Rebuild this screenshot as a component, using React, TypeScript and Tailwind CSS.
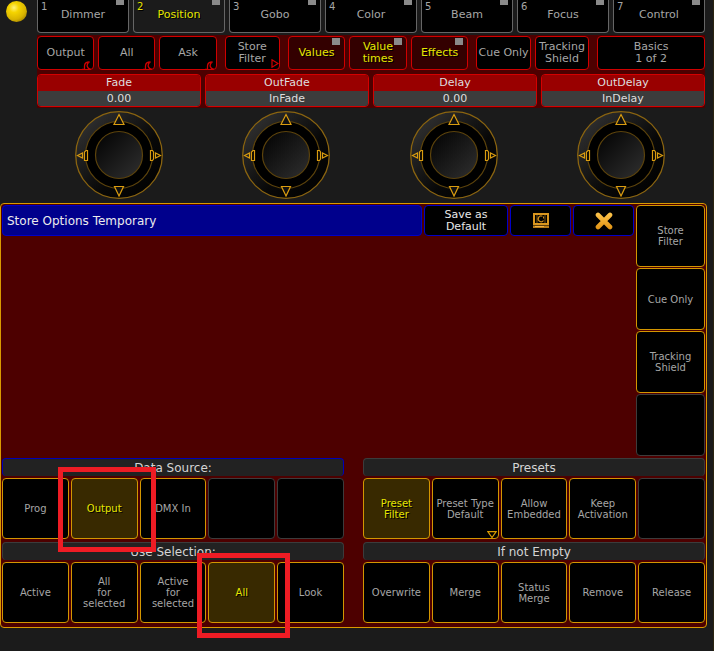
import React, { useId } from 'react';
import clsx from 'clsx';

type Cell = {
  label?: string;
  active?: boolean;
  mark?: 'menu';
  highlight?: string;
};

const PRESET_TYPES = ['Dimmer', 'Position', 'Gobo', 'Color', 'Beam', 'Focus', 'Control'];

const ENCODERS = [
  { label: 'Fade', value: '0.00' },
  { label: 'OutFade', value: 'InFade' },
  { label: 'Delay', value: '0.00' },
  { label: 'OutDelay', value: 'InDelay' },
];

const SIDE_OPTIONS: Cell[] = [
  { label: 'Store\nFilter' },
  { label: 'Cue Only' },
  { label: 'Tracking\nShield' },
  {},
];

const DATA_SOURCE: Cell[] = [
  { label: 'Prog' },
  { label: 'Output', active: true, highlight: '-left-[14px] -right-[19px] -top-3 -bottom-[14px]' },
  { label: 'DMX In' },
  {},
  {},
];

const PRESETS: Cell[] = [
  { label: 'Preset\nFilter', active: true },
  { label: 'Preset Type\nDefault', mark: 'menu' },
  { label: 'Allow\nEmbedded' },
  { label: 'Keep\nActivation' },
  {},
];

const USE_SELECTION: Cell[] = [
  { label: 'Active' },
  { label: 'All\nfor\nselected' },
  { label: 'Active\nfor\nselected' },
  { label: 'All', active: true, highlight: '-left-3 -right-4 -top-[10px] -bottom-4' },
  { label: 'Look' },
];

const IF_NOT_EMPTY: Cell[] = [
  { label: 'Overwrite' },
  { label: 'Merge' },
  { label: 'Status\nMerge' },
  { label: 'Remove' },
  { label: 'Release' },
];

const YELLOW = 'text-[#e6e600] [text-shadow:1px_1px_0_#000]';

function Lamp({ className }: { className?: string }) {
  return <span className={clsx('absolute h-[7px] w-2 bg-[#8a8a8a]', className)} />;
}

function PresetTab({ label, index }: { label: string; index: number }) {
  const active = index === 1;
  return (
    <button
      className={clsx(
        'relative h-[33px] min-w-0 flex-1 rounded-b-[4px] border border-t-0 border-[#666] pb-[3px] text-[11px] leading-3',
        active ? 'bg-[#1b1b1b]' : 'bg-black',
        active ? YELLOW : 'text-[#a6a6a6]'
      )}
    >
      <span className="absolute left-[3px] top-px text-[10px] leading-3">{index + 1}</span>
      <Lamp className="-top-0.5 right-1" />
      {label}
    </button>
  );
}

type BarButtonProps = {
  label: string;
  on?: boolean;
  corner?: 'hook' | 'arrow';
};

function BarButton({ label, on, corner }: BarButtonProps) {
  return (
    <button
      className={clsx(
        'relative h-[34px] min-w-0 flex-1 whitespace-pre rounded-[4px] border border-[#d00000] text-[11px] leading-3',
        on ? 'bg-[#330000]' : 'bg-black',
        on ? YELLOW : 'text-[#a6a6a6]'
      )}
    >
      <span className="flex justify-center">{label}</span>
      {on && <Lamp className="right-1 top-px" />}
      {corner === 'hook' && (
        <svg className="absolute -bottom-px right-0.5" width="9" height="9" viewBox="0 0 9 9" fill="none" stroke="#d00000">
          <path d="M0 8.500H2.500V5C2.500 2 4.500 1 7.500 1C5.500 2 4.800 3.500 5.300 5.500C5.600 7 6.500 7.800 9 8.500" strokeWidth="1.3" />
        </svg>
      )}
      {corner === 'arrow' && (
        <svg className="absolute bottom-px right-0" width="8" height="9" viewBox="0 0 8 9" fill="none" stroke="#d00000">
          <path d="M1 .8L7 4.500L1 8.200Z" strokeWidth="1.2" />
        </svg>
      )}
    </button>
  );
}

function EncoderField({ label, value }: { label: string; value: string }) {
  const id = useId();
  return (
    <div className="min-w-0 flex-1 overflow-hidden rounded-[4px] border border-[#d40000] text-center text-[11px] text-[#dedede]">
      <label htmlFor={id} className="block h-4 bg-[#990000] leading-4">
        {label}
      </label>
      <input
        id={id}
        defaultValue={value}
        className="block h-[15px] w-full bg-[#3c3c3c] p-0 text-center leading-4 outline-none"
      />
    </div>
  );
}

function Encoder() {
  const id = useId();
  return (
    <svg width="88" height="88" viewBox="0 0 88 88" fill="none">
      <defs>
        <linearGradient id={`${id}ring`} x1="0" y1="0" x2="1" y2="1">
          <stop offset="0" stopColor="#383838" />
          <stop offset="0.6" stopColor="#080808" />
          <stop offset="1" stopColor="#000" />
        </linearGradient>
        <linearGradient id={`${id}knob`} x1="0" y1="0" x2="1" y2="1">
          <stop offset="0.1" stopColor="#060606" />
          <stop offset="1" stopColor="#303030" />
        </linearGradient>
      </defs>
      <circle cx="44" cy="44" r="43.3" fill={`url(#${id}ring)`} stroke="#8a6410" strokeWidth="1.3" />
      <circle cx="44" cy="44" r="33.5" fill="#000" stroke="#5c430c" strokeWidth="1.2" />
      <circle cx="44" cy="44" r="23.5" fill={`url(#${id}knob)`} stroke="#5c430c" strokeWidth="1.2" />
      <g stroke="#d99c10" strokeWidth="1.2">
        <path d="M44 3.500L49 13.500H39Z" fill="#111" />
        <path d="M44 85L39.500 75.500H48.500Z" fill="#111" />
        <path d="M2.500 44.500L7.500 42V47Z" />
        <path d="M85.500 44.500L80.500 42V47Z" />
        <path d="M12.500 39.500V49.500H9.500V41L11 39.500Z" fill="#000" />
        <path d="M75.500 39.500V49.500H77.500L78.500 48V41L77.500 39.500Z" fill="#000" />
      </g>
    </svg>
  );
}

function OptionButton({ cell, className }: { cell: Cell; className: string }) {
  return (
    <button
      className={clsx(
        'relative whitespace-pre rounded-[4px] border text-[10px] leading-[11px]',
        cell.label ? 'border-[#d39600]' : 'border-[#3c3c3c]',
        cell.active ? 'bg-[#382900]' : 'bg-black',
        cell.active ? YELLOW : 'text-[#a6a6a6]',
        className
      )}
    >
      <span className="flex justify-center">{cell.label}</span>
      {cell.mark === 'menu' && (
        <svg className="absolute bottom-0 right-px" width="10" height="7" viewBox="0 0 10 7" fill="none" stroke="#d99a00">
          <path d="M.8 .6H9.200L5 6.500Z" strokeWidth="1.2" />
        </svg>
      )}
      {cell.highlight && (
        <span className={clsx('pointer-events-none absolute z-10 border-[5px] border-[#ee1c24]', cell.highlight)} />
      )}
    </button>
  );
}

function OptionGroup({ title, cells, focused }: { title: string; cells: Cell[]; focused?: boolean }) {
  return (
    <section className="min-w-0 flex-1">
      <h2
        className={clsx(
          'mb-0.5 h-[18px] rounded-[4px] border border-b-0 bg-[#222] text-center text-[12px] leading-[19px] text-[#d4d4d4]',
          focused ? 'border-[#0000b8]' : 'border-[#3c3c3c]'
        )}
      >
        {title}
      </h2>
      <div className="flex gap-0.5">
        {cells.map((cell, i) => (
          <OptionButton key={i} cell={cell} className="h-[61px] min-w-0 flex-1" />
        ))}
      </div>
    </section>
  );
}

const TITLE_BUTTON = 'flex items-center justify-center rounded-[4px] border border-[#0000c8] bg-black';

function StoreDialog() {
  return (
    <div className="mr-1.5 rounded-[4px] border border-[#d99a00] bg-[#4d0000] px-px pb-1 pt-px">
      <div className="flex gap-0.5">
        <div className="min-w-0 flex-1">
          <div className="flex h-[31px] gap-0.5">
            <h1 className="flex flex-1 items-center rounded-[4px] border border-[#0000c8] bg-[#00008c] pl-1 text-[12px] text-[#ececec]">
              Store Options Temporary
            </h1>
            <button className={clsx(TITLE_BUTTON, 'w-[84px] text-[11px] leading-3 text-[#e8e8e8]')}>
              Save as
              <br />
              Default
            </button>
            <button aria-label="Display" className={clsx(TITLE_BUTTON, 'w-[61px]')}>
              <svg width="16" height="15" viewBox="0 0 16 15" fill="none">
                <rect x="1" y="1" width="14" height="10" stroke="#d9961e" strokeWidth="2" />
                <path d="M4 2V10M12 2V10" stroke="#7a5410" />
                <path d="M9.500 3.300A2.900 2.900 0 1 0 10.500 7.500" stroke="#c98a1c" strokeWidth="1.3" />
                <path d="M10.500 3.500V5.500" stroke="#c98a1c" />
                <path d="M0 12.500H16V15H0Z" fill="#b87c18" />
                <path d="M2 13.500H11" stroke="#f0b040" />
              </svg>
            </button>
            <button aria-label="Close" className={clsx(TITLE_BUTTON, 'w-[61px]')}>
              <svg width="18" height="18" viewBox="0 0 18 18" fill="none">
                <defs>
                  <linearGradient id="close" x1="0" y1="0" x2="0" y2="18" gradientUnits="userSpaceOnUse">
                    <stop stopColor="#ffc850" />
                    <stop offset="1" stopColor="#e09010" />
                  </linearGradient>
                </defs>
                <path d="M3 3L15 15M15 3L3 15" stroke="url(#close)" strokeWidth="4.600" strokeLinecap="round" />
              </svg>
            </button>
          </div>
        </div>
        <div className="flex w-[69px] flex-col gap-px">
          {SIDE_OPTIONS.map((cell, i) => (
            <OptionButton key={i} cell={cell} className="h-[62px]" />
          ))}
        </div>
      </div>

      <div className="mt-0.5 flex gap-[19px]">
        <OptionGroup title="Data Source:" cells={DATA_SOURCE} focused />
        <OptionGroup title="Presets" cells={PRESETS} />
      </div>
      <div className="mt-[3px] flex gap-[19px]">
        <OptionGroup title="Use Selection:" cells={USE_SELECTION} />
        <OptionGroup title="If not Empty" cells={IF_NOT_EMPTY} />
      </div>
    </div>
  );
}

export default function App() {
  return (
    <div className="min-h-screen border-r border-[#2a2410] bg-[#1b1b1b] font-['DejaVu_Sans',Verdana,sans-serif]">
      <div className="flex pr-2">
        {/* Status lamp */}
        <div className="w-[37px] shrink-0 pl-1.5 pt-px">
          <div className="h-[21px] w-[21px] rounded-full bg-[radial-gradient(circle_at_38%_32%,#fff27a_0%,#f5d400_25%,#d9b400_60%,#7a6000_100%)]" />
        </div>

        <div className="min-w-0 flex-1">
          <nav className="flex gap-1 pb-0.5">
            {PRESET_TYPES.map((label, i) => (
              <PresetTab key={label} label={label} index={i} />
            ))}
          </nav>

          <div className="bg-[#4d0000] pb-px pt-px">
            <div className="flex gap-2">
              <div className="flex min-w-0 flex-[180] gap-1">
                <BarButton label="Output" corner="hook" />
                <BarButton label="All" corner="hook" />
                <BarButton label="Ask" corner="hook" />
              </div>
              <div className="flex min-w-0 flex-[55]">
                <BarButton label={'Store\nFilter'} corner="arrow" />
              </div>
              <div className="flex min-w-0 flex-[181] gap-1">
                <BarButton label="Values" on />
                <BarButton label={'Value\ntimes'} on />
                <BarButton label="Effects" on />
              </div>
              <div className="flex min-w-0 flex-[113] gap-1">
                <BarButton label="Cue Only" />
                <BarButton label={'Tracking\nShield'} />
              </div>
              <div className="flex min-w-0 flex-[108]">
                <BarButton label={'Basics\n1 of 2'} />
              </div>
            </div>
            <div className="mt-1 flex gap-1">
              {ENCODERS.map((enc) => (
                <EncoderField key={enc.label} label={enc.label} value={enc.value} />
              ))}
            </div>
          </div>

          <div className="grid grid-cols-4 justify-items-center gap-x-1 pb-1 pr-0.5 pt-[3px]">
            {ENCODERS.map((enc) => (
              <Encoder key={enc.label} />
            ))}
          </div>
        </div>
      </div>

      <StoreDialog />
    </div>
  );
}
